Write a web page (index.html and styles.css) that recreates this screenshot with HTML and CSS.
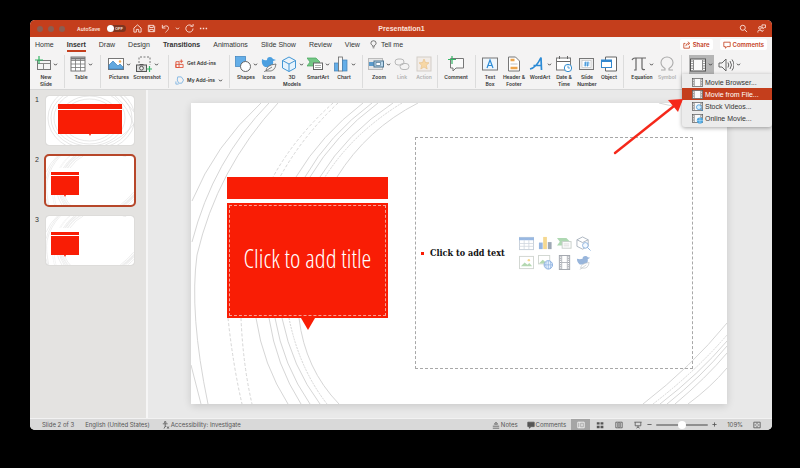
FILE: index.html
```html
<!DOCTYPE html>
<html lang="en">
<head>
    <meta charset="UTF-8">
    <meta name="viewport" content="width=device-width, initial-scale=1.0">
    <title>Presentation1</title>
    <link rel="stylesheet" href="styles.css">
</head>
<body>
    <!-- Shared symbols -->
    <svg class="symbols" aria-hidden="true">
        <symbol id="chevron" viewBox="0 0 5 5"><path d="M1 1.7 2.5 3.2 4 1.7" fill="none" stroke="#444" stroke-width="1"/></symbol>
        <symbol id="film" viewBox="0 0 16 16">
            <rect x="0.5" y="2" width="15" height="12" fill="#fafafa" stroke="#555"/>
            <path d="M3.5 3v10M12.5 3v10" stroke="#555" stroke-width="0.7"/>
            <path d="M2 3.5v10M14 3.5v10" stroke="#777" stroke-width="1.4" stroke-dasharray="1.2 1.2"/>
        </symbol>
        <symbol id="swoosh" viewBox="0 0 536 301" preserveAspectRatio="none">
            <g fill="none">
                <path d="M70 0Q24 42 1 98M78 0Q22 57 1 139M87 0Q26 66 6 152Q-2 210 17 301M0 262 10 301"/>
                <path d="M142 0Q104 34 82 74M147 0Q111 34 89 74M37 215Q42 262 51 301M50 215Q52 262 61 301" stroke-dasharray="3 2"/>
                <path d="M172 0Q130 32 105 74M181 0Q138 32 114 74M187 0Q144 32 119 74M202 0Q156 30 129 74M227 0Q176 26 146 74"/>
                <path d="M65 215Q72 262 97 301M78 215Q85 262 110 301M84 215Q92 262 119 301M91 215Q101 264 129 301M108 215Q114 266 148 301"/>
                <path d="M211 0Q162 30 134 74M98 215Q108 265 136 301" stroke-dasharray="2 1"/>
                <path d="M452 301Q500 264 536 220M469 301Q508 271 536 238M476 301Q510 274 536 243M484 301Q515 275 536 250M497 301Q520 284 536 265M468 0Q478 3 488 3"/>
                <path d="M462 301Q505 268 536 232" stroke-dasharray="2 1"/>
            </g>
        </symbol>
        <symbol id="rings" viewBox="0 0 89 49" preserveAspectRatio="none">
            <g fill="none" stroke-width="0.6">
                <ellipse cx="46" cy="22" rx="44" ry="34"/>
                <ellipse cx="46" cy="22" rx="41" ry="31"/>
                <ellipse cx="44" cy="22" rx="36" ry="28"/>
                <ellipse cx="44" cy="24" rx="30" ry="24"/>
                <ellipse cx="44" cy="24" rx="27" ry="21"/>
                <path d="M70 0Q84 12 89 30M76 0 89 16M60 49Q78 42 89 28"/>
            </g>
        </symbol>
    </svg>

    <div class="window">
        <header class="titlebar">
            <div class="titlebar-left">
                <span class="lights"><i></i><i></i><i></i></span>
                <label class="autosave" for="autosave">AutoSave</label>
                <span class="switch"><input type="checkbox" id="autosave"><span>OFF</span></span>
                <div class="quick">
                    <button aria-label="Home"><svg viewBox="0 0 10 10"><path d="M1 4.5 5 1l4 3.5V9H6.3V6H3.7v3H1z"/></svg></button>
                    <button aria-label="Save"><svg viewBox="0 0 10 10"><path d="M1.5 1.5h6l1 1v6h-7zM3 1.5v2.4h4V1.5M3 8.500V6h4v2.500"/></svg></button>
                    <button aria-label="Undo"><svg viewBox="0 0 10 10"><path d="M1.500 1v3.500H5M1.700 4.300C4 1 9 1.500 8.300 5 8 6.500 6.500 8 5 9.300"/></svg></button>
                    <button class="tiny" aria-label="Undo history"><svg viewBox="0 0 5 5"><path d="M1 1.700 2.500 3.200 4 1.700"/></svg></button>
                    <button aria-label="Redo"><svg viewBox="0 0 10 10"><path d="M8.900 5A4 4 0 1 1 7.500 2M6 2.500h3V0"/></svg></button>
                    <button aria-label="More"><svg viewBox="0 0 10 10"><path d="M1 5h1.600M4.200 5h1.600M7.400 5H9" stroke-width="1.600"/></svg></button>
                </div>
            </div>
            <h1>Presentation1</h1>
            <div class="titlebar-right">
                <button aria-label="Search"><svg viewBox="0 0 10 10"><circle cx="4.200" cy="4.200" r="2.800"/><path d="M6.300 6.300 9 9"/></svg></button>
                <button aria-label="Presence"><svg viewBox="0 0 10 10"><circle cx="3.300" cy="4.300" r="1.500"/><path d="M1 9.500V8.300Q1 7 2.500 7h2Q5.500 7 5.500 8.500M5.500 1h4v3H8L6.500 5.300V4h-1zM5.500 8.500l2-2"/></svg></button>
            </div>
        </header>

        <nav class="tabs">
            <a href="#">Home</a>
            <a href="#" class="active">Insert</a>
            <a href="#">Draw</a>
            <a href="#">Design</a>
            <a href="#" class="strong">Transitions</a>
            <a href="#">Animations</a>
            <a href="#">Slide Show</a>
            <a href="#">Review</a>
            <a href="#">View</a>
            <a href="#" class="tell"><svg viewBox="0 0 8 10"><path d="M2.800 7V6Q1 5 1 3.500a3 2.800 0 0 1 6 0Q7 5 5.200 6v1zM3 8.800h2" fill="none" stroke="#444" stroke-width="0.800"/></svg>Tell me</a>
            <div class="tab-actions">
                <button><svg viewBox="0 0 10 10"><path d="M3 3H1v6h7V6M3.500 6.500Q3.500 3 7 3M6 1l2.500 2L6 5"/></svg>Share</button>
                <button><svg viewBox="0 0 10 10"><path d="M1 1.500h8v5.500H5L3 9V7H1z"/></svg>Comments</button>
            </div>
        </nav>

        <div class="ribbon">
            <div class="group">
                <button class="tool w24"><span class="icon"><svg viewBox="0 0 16 16"><rect x="2.500" y="4.500" width="13" height="9" fill="#f4f4f4" stroke="#777"/><path d="M3 7.500h12M8.500 7.500v6" stroke="#888"/><path d="M4 0v8M0 4h8" stroke="#35b566" stroke-width="1.200"/></svg><svg class="chev"><use href="#chevron"/></svg></span>New<br>Slide</button>
            </div>
            <div class="group">
                <button class="tool w24"><span class="icon"><svg viewBox="0 0 16 16"><rect x="1" y="1" width="14" height="14" fill="#fff" stroke="#777"/><path d="M1 4.500h14M1 8h14M1 11.500h14M5.500 2v13M10.500 2v13" stroke="#777" stroke-width="0.800"/><path d="M1 2.500h14" stroke="#777" stroke-width="2"/></svg><svg class="chev"><use href="#chevron"/></svg></span>Table</button>
            </div>
            <div class="group">
                <button class="tool w28"><span class="icon"><svg viewBox="0 0 16 16"><rect x="0.500" y="2.500" width="15" height="11" fill="#fff" stroke="#777"/><path d="M1 13V9l4-4 5 5 2-2 3 3v2z" fill="#62a8df" stroke="#3a80bd" stroke-width="0.700"/><circle cx="12" cy="5.500" r="1.200" fill="#f0a850"/></svg><svg class="chev"><use href="#chevron"/></svg></span>Pictures</button>
                <button class="tool w28"><span class="icon"><svg viewBox="0 0 16 16"><path d="M3 7V1h11v8" fill="none" stroke="#777" stroke-dasharray="2 1.500"/><rect x="0.500" y="9" width="10" height="6.500" fill="#ddd" stroke="#555"/><circle cx="5.500" cy="12.200" r="1.900" fill="#eee" stroke="#555"/><path d="M3.500 8.500h4" stroke="#555"/><path d="M13.500 10v6M10.500 13h5.500" stroke="#35b566" stroke-width="1.200"/></svg><svg class="chev"><use href="#chevron"/></svg></span>Screenshot</button>
            </div>
            <div class="group addins">
                <button><svg viewBox="0 0 10 10"><path d="M1 3h3.500v6.500H1zM1 6h8v3.500H1zM7 .500v4M5 2.500h4" fill="none" stroke="#e0533a"/></svg>Get Add-ins</button>
                <button><svg viewBox="0 0 10 10"><path d="M3 1h4l2.500 3.500L7.500 8H4L2.500 4.500zM1 6v3h3" fill="none" stroke="#7fb4e2"/></svg>My Add-ins<svg class="chev"><use href="#chevron"/></svg></button>
            </div>
            <div class="group">
                <button class="tool w24"><span class="icon"><svg viewBox="0 0 16 16"><rect x="0.500" y="0.500" width="10" height="10" fill="#64aee8" stroke="#3a80bd" stroke-width="0.700"/><circle cx="10.500" cy="10.500" r="5" fill="#fff" stroke="#666"/></svg><svg class="chev"><use href="#chevron"/></svg></span>Shapes</button>
                <button class="tool w22"><span class="icon"><svg viewBox="0 0 16 16"><path d="M1 3q3 2 5 1 0-3 3-3 2 0 3 2l3 1-3 1q1 5-3 6H4Q0 9 1 3z" fill="#4b9fe0"/><path d="M5 15q0-6 10-7-1 8-8 7zM3 16l8-5" fill="#f5f5f5" stroke="#666" stroke-width="0.800"/></svg></span>Icons</button>
                <button class="tool w24"><span class="icon"><svg viewBox="0 0 16 16"><path d="M8 1l6.500 3.500v7.500L8 15.500 1.500 12V4.500zM1.500 4.500 8 8l6.500-3.500M8 8v7.500" fill="#e6f3fd" stroke="#4497d5"/></svg><svg class="chev"><use href="#chevron"/></svg></span>3D<br>Models</button>
                <button class="tool w28"><span class="icon"><svg viewBox="0 0 16 16"><path d="M0 2h9l4 4-4 4H0l3-4z" fill="#73c685" stroke="#46a65c" stroke-width="0.700"/><rect x="6.500" y="7" width="9" height="6.500" fill="#fff" stroke="#666"/><path d="M8 9.500h6M8 11.500h6" stroke="#888" stroke-width="0.700"/></svg><svg class="chev"><use href="#chevron"/></svg></span>SmartArt</button>
                <button class="tool w24"><span class="icon"><svg viewBox="0 0 16 16"><rect x="1.500" y="7" width="4" height="8" fill="#64aee8" stroke="#4380b5" stroke-width="0.700"/><rect x="5.500" y="1" width="4" height="14" fill="#f8f8f8" stroke="#666" stroke-width="0.800"/><rect x="9.500" y="4" width="4.500" height="11" fill="#64aee8" stroke="#4380b5" stroke-width="0.700"/></svg><svg class="chev"><use href="#chevron"/></svg></span>Chart</button>
            </div>
            <div class="group">
                <button class="tool w24"><span class="icon"><svg viewBox="0 0 16 16"><rect x="0.500" y="2.500" width="14" height="11" fill="#e6e6e6" stroke="#bbb"/><path d="M1 8h5" stroke="#5c9bcb" stroke-width="4"/><rect x="6" y="5" width="9.500" height="6" fill="#b9d7ec" stroke="#4d7590"/><rect x="8" y="6.500" width="4.500" height="3" fill="#fff" stroke="#4d7590" stroke-width="0.700"/></svg><svg class="chev"><use href="#chevron"/></svg></span>Zoom</button>
                <button class="tool w22" disabled><span class="icon"><svg viewBox="0 0 16 16"><g fill="none" stroke="#b8b8b8"><rect x="1" y="3" width="9" height="6" rx="3"/><rect x="6" y="7.500" width="9" height="6" rx="3"/></g></svg></span>Link</button>
                <button class="tool w22" disabled><span class="icon"><svg viewBox="0 0 16 16"><rect x="1" y="1" width="14" height="14" fill="#f2ece7" stroke="#d2cdc8"/><path d="m8 3 1.500 3.500 3.500.300-2.700 2.500.900 3.700L8 11l-3.200 2 .900-3.700L3 6.800l3.500-.300z" fill="#f7d7a5" stroke="#e6bd83" stroke-width="0.600"/></svg></span>Action</button>
            </div>
            <div class="group">
                <button class="tool w28"><span class="icon"><svg viewBox="0 0 16 16"><path d="M2.500 2.500h13v9.500H8l-3 3v-3H2.500z" fill="#fafafa" stroke="#777"/><path d="M4 0v8M0 3.500h8" stroke="#35b566" stroke-width="1.200"/></svg></span>Comment</button>
            </div>
            <div class="group">
                <button class="tool w20"><span class="icon"><svg viewBox="0 0 16 16"><rect x="0.500" y="2" width="15" height="12" fill="#eef6fc" stroke="#777"/><path d="M5 12 8 4l3 8M6 9.500h4" fill="none" stroke="#2c8bd6" stroke-width="1.200"/></svg></span>Text<br>Box</button>
                <button class="tool w28"><span class="icon"><svg viewBox="0 0 16 16"><path d="M2.500 1h7l4 4v10h-11z" fill="#fff" stroke="#777"/><path d="M4.500 4h4M4.500 12h7" stroke="#eda54c" stroke-width="2.400"/><path d="M4.500 8h7" stroke="#aaa" stroke-width="0.700"/></svg></span>Header &amp;<br>Footer</button>
                <button class="tool w24"><span class="icon"><svg viewBox="0 0 16 16"><path d="M1 13Q7 12 12 1.500L12.500 14M4.500 9.500h8" fill="none" stroke="#2c8bd6" stroke-width="1.700"/></svg><svg class="chev"><use href="#chevron"/></svg></span>WordArt</button>
                <button class="tool w24"><span class="icon"><svg viewBox="0 0 16 16"><rect x="0.500" y="2" width="14" height="12" fill="#fff" stroke="#777"/><path d="M1 5.500h13M3.500 0v3M11.500 0v3" stroke="#666"/><circle cx="12" cy="12" r="3.700" fill="#fff" stroke="#318dd1"/><path d="M12 9.500V12h2" fill="none" stroke="#318dd1" stroke-width="0.800"/></svg></span>Date &amp;<br>Time</button>
                <button class="tool w22"><span class="icon"><svg viewBox="0 0 16 16"><rect x="0.500" y="2.500" width="14" height="11" fill="#eee" stroke="#777"/><rect x="3" y="4.500" width="9" height="7" fill="#fff" stroke="#bbb" stroke-width="0.600"/><path d="M6.800 5.500 6.200 10.500M9 5.500l-.600 5M5 7h5.500M4.800 9h5.500" stroke="#2c8bd6" stroke-width="0.800"/></svg></span>Slide<br>Number</button>
                <button class="tool w22"><span class="icon"><svg viewBox="0 0 16 16"><path d="M4.500 1h11v14h-11z" fill="#fff" stroke="#666"/><rect x="0.500" y="4" width="10" height="7.500" fill="#fff" stroke="#3187cf"/><path d="M.500 5h10" stroke="#3187cf" stroke-width="2"/></svg></span>Object</button>
            </div>
            <div class="group">
                <button class="tool w28"><span class="icon"><svg viewBox="0 0 16 16"><path d="M1 4q1-2 3-2h11M5 2.500V14H3M11 2.500V12q0 2 3 1.500" fill="none" stroke="#666" stroke-width="1.200"/></svg><svg class="chev"><use href="#chevron"/></svg></span>Equation</button>
                <button class="tool w22" disabled><span class="icon"><svg viewBox="0 0 16 16"><path d="M2 14h4v-1.500Q2 10 2 6.500a6 5.500 0 0 1 12 0Q14 10 10 12.500V14h4" fill="none" stroke="#aaa" stroke-width="1.100"/></svg></span>Symbol</button>
            </div>
            <div class="group media">
                <button class="media-button open" aria-label="Video"><svg><use href="#film"/></svg><svg class="chev"><use href="#chevron"/></svg></button>
                <button class="media-button" aria-label="Audio"><svg viewBox="0 0 16 16"><path d="M1 6h3l4-4v12l-4-4H1zM10 5.500q1.500 2.500 0 5M12 4q3 4 0 8M14 2.500q4 5.500 0 11" fill="none" stroke="#666"/></svg><svg class="chev"><use href="#chevron"/></svg></button>
                <div class="menu">
                    <button><svg><use href="#film"/></svg>Movie Browser...</button>
                    <button class="selected"><svg><use href="#film"/></svg>Movie from File...</button>
                    <button><svg viewBox="0 0 16 16"><use href="#film"/><circle cx="10" cy="9" r="3.500" fill="#d8effb" stroke="#2c8bd6"/><path d="m12.500 11.500 3 3" stroke="#2c8bd6" stroke-width="1.300"/></svg>Stock Videos...</button>
                    <button><svg viewBox="0 0 16 16"><use href="#film"/><circle cx="11.500" cy="11" r="4.500" fill="#4ca7e2"/><path d="M7 11h9M11.500 6.500v9" stroke="#d8effb" stroke-width="0.700"/></svg>Online Movie...</button>
                    <svg class="pointer" viewBox="0 0 72 58"><path d="M3 55 62 8" stroke="#f5281a" stroke-width="2.400" stroke-linecap="round"/><path d="M71 1 66 14 56 2z" fill="#f5281a"/></svg>
                </div>
            </div>
        </div>

        <main class="workspace">
            <aside class="thumbs">
                <div class="thumb-row"><span>1</span><div class="thumb title-slide"><svg><use href="#rings"/></svg><div class="mini"></div></div></div>
                <div class="thumb-row"><span>2</span><div class="thumb current"><svg><use href="#swoosh"/></svg><div class="mini"></div></div></div>
                <div class="thumb-row"><span>3</span><div class="thumb"><svg><use href="#swoosh"/></svg><div class="mini"></div></div></div>
            </aside>
            <section class="canvas">
                <div class="slide">
                    <svg class="lines"><use href="#swoosh"/></svg>
                    <div class="title-block">
                        <div class="title-bar"></div>
                        <div class="title-box"><h2>Click to add title</h2></div>
                    </div>
                    <div class="text-box">
                        <p>Click to add text</p>
                        <div class="inserts">
                            <svg viewBox="0 0 16 16"><rect x="0.500" y="1.500" width="15" height="13" fill="#fff" stroke="#b8c4d2"/><path d="M0 3h16" stroke="#7fa7dc" stroke-width="3"/><path d="M0 8h16M0 11h16M5.500 4v10M10.500 4v10" stroke="#c3cbd5" stroke-width="0.800"/></svg>
                            <svg viewBox="0 0 16 16"><path d="M1 7h4v7H1z" fill="#7da5dc"/><path d="M5.500 1h4v13h-4z" fill="#f3cf75"/><path d="M10.500 6.500h4V14h-4z" fill="#8793a3"/></svg>
                            <svg viewBox="0 0 16 16"><path d="M0 2h10l4 4-4 4H0l3-4z" fill="#9bcf9f"/><rect x="5.500" y="6" width="9.500" height="7" fill="#fff" stroke="#b9c3bd"/><path d="M7 8.500h6M7 10.500h6" stroke="#bbb" stroke-width="0.700"/></svg>
                            <svg viewBox="0 0 16 16"><path d="M7 1l6 3v7l-6 3-6-3V4zM1 4l6 3 6-3" fill="#fff" stroke="#8c99a8" stroke-width="0.900"/><circle cx="10" cy="10" r="3" fill="#f2f8ff" stroke="#6fa0d6"/><path d="m12 12 3.500 3.500" stroke="#6fa0d6"/></svg>
                            <svg viewBox="0 0 16 16"><rect x="0.500" y="1.500" width="15" height="13" fill="#fff" stroke="#c6ccc6"/><path d="M2 12l4-4 3 2.500 2-2 3 3.500z" fill="#a2cf9e"/><circle cx="10.500" cy="5.500" r="1.300" fill="#f3cf75"/></svg>
                            <svg viewBox="0 0 16 16"><rect x="0.500" y="0.500" width="12" height="9" fill="#fff" stroke="#c6ccc6"/><path d="M1 9l4-4 5 4z" fill="#a2cf9e"/><circle cx="11" cy="10.500" r="4.500" fill="#e1efff" stroke="#6998d6"/><path d="M6.500 10.500h9M11 6v9M8.800 7q-1 3.500 0 7M13.200 7q1 3.500 0 7" fill="none" stroke="#6998d6" stroke-width="0.700"/></svg>
                            <svg viewBox="0 0 16 16"><rect x="2.500" y="0.500" width="11" height="15" fill="#fff" stroke="#8a8f98"/><path d="M5 1v14M11 1v14M5 8h6" stroke="#8a8f98" stroke-width="0.800"/><path d="M3.800 1.500v14M12.200 1.500v14" stroke="#8a8f98" stroke-width="1.400" stroke-dasharray="1 1"/></svg>
                            <svg viewBox="0 0 16 16"><path d="M1 4q3 1 6 0 0-3 3-3 2 0 2.500 1.500l2.500.500-2.500 1.500q1 5-4 5.500H4Q1 8 1 4z" fill="#7fa3d3"/><path d="M5 14q0-5 9-6-1 7-7 6zM4 15.500l7-5" fill="#fff" stroke="#b0b5bb" stroke-width="0.700"/></svg>
                        </div>
                    </div>
                </div>
            </section>
        </main>

        <footer class="status">
            <span class="slide-count">Slide 2 of 3</span>
            <span class="language">English (United States)</span>
            <button><svg viewBox="0 0 10 10"><circle cx="4" cy="1.500" r="1"/><path d="M1 3.500h6M4 3.500v3L2.500 9.500M4 6l1 1.500M6 7l3 2.500M9 7 6 9.500"/></svg>Accessibility: Investigate</button>
            <div class="status-right">
                <button><svg viewBox="0 0 10 10"><path d="M1 9h8M1 6.500h8M3 4l2-2.500L7 4z"/></svg>Notes</button>
                <button class="comments"><svg viewBox="0 0 10 10"><path d="M1 1.500h8v5.500H5L3 9V7H1z" fill="#555"/></svg>Comments</button>
                <div class="views">
                    <button class="on" aria-label="Normal"><svg viewBox="0 0 10 10"><path d="M1 1.500h8v7H1zM3.500 1.500v7M5 4h2.500M5 6h2.500" stroke="#fff"/></svg></button>
                    <button aria-label="Slide sorter"><svg viewBox="0 0 10 10"><path d="M1 3h3.500M5.700 3h3.500M1 7.500h3.500M5.700 7.500h3.500" stroke-width="3"/></svg></button>
                    <button aria-label="Reading view"><svg viewBox="0 0 10 10"><path d="M1 1.500h8v7H1zM5 1.500v7M2.500 3.500h1.500M2.500 5h1.500M2.500 6.500h1.500M6 3.500h1.500M6 5h1.500M6 6.500h1.500"/></svg></button>
                    <button aria-label="Slide show"><svg viewBox="0 0 10 10"><path d="M.500 1.500h9M1.500 1.500v4.500h7V1.500M5 6v2M3 9l2-1.500L7 9"/></svg></button>
                </div>
                <button class="sign" aria-label="Zoom out"><svg viewBox="0 0 6 6"><path d="M.500 3h5"/></svg></button>
                <input type="range" aria-label="Zoom level" min="0" max="100" value="50">
                <button class="sign" aria-label="Zoom in"><svg viewBox="0 0 6 6"><path d="M.500 3h5M3 .500v5"/></svg></button>
                <span class="percent">109%</span>
                <button aria-label="Fit slide"><svg viewBox="0 0 10 10"><path d="M1 1.500h8v7H1zM5 2v2M5 6v2M2 5h2M6 5h2"/></svg></button>
            </div>
        </footer>
    </div>
</body>
</html>
```
FILE: styles.css
```css
* {
    box-sizing: border-box;
}

body {
    margin: 0;
    padding: 20px 28px 38px 30px;
    height: 100vh;
    display: flex;
    background: #000;
    font-family: "Liberation Sans", Arial, sans-serif;
    font-size: 7px;
    color: #333;
}

button {
    display: flex;
    align-items: center;
    margin: 0;
    padding: 0;
    border: 0;
    background: none;
    font: inherit;
    color: inherit;
}

svg {
    flex: none;
}

.symbols {
    position: absolute;
    width: 0;
    height: 0;
}

.window {
    flex: 1;
    min-width: 0;
    display: flex;
    flex-direction: column;
    border-radius: 5px;
    background: #f4f3f3;
}

/* Title bar */
.titlebar {
    display: grid;
    grid-template-columns: 1fr auto 1fr;
    align-items: center;
    height: 17px;
    padding: 0 6px 0 7px;
    border-radius: 5px 5px 0 0;
    background: #c43e1c;
    color: #fbe3dc;
}

.titlebar h1 {
    margin: 0;
    font-size: 7px;
}

.titlebar svg {
    width: 9px;
    height: 9px;
    fill: none;
    stroke: #fbe3dc;
}

.titlebar-left,
.quick {
    display: flex;
    align-items: center;
}

.titlebar-right {
    display: flex;
    justify-content: flex-end;
    gap: 9px;
}

.lights {
    display: flex;
    gap: 5px;
}

.lights i {
    width: 6px;
    height: 6px;
    border-radius: 50%;
    background: #8c5e52;
}

.autosave {
    margin-left: 12px;
    font-family: Inter, sans-serif;
    font-size: 5px;
    font-weight: 600;
    width: 26px;
    white-space: nowrap;
}

.switch {
    display: flex;
    align-items: center;
    width: 19px;
    height: 7px;
    margin-left: 4px;
    border-radius: 4px;
    background: #7d3520;
    font-size: 4px;
    font-weight: bold;
}

.switch input {
    appearance: none;
    width: 7px;
    height: 7px;
    margin: 0 1px 0 0;
    border-radius: 50%;
    background: #fff;
}

.quick {
    gap: 5px;
    margin-left: 7px;
}

.quick .tiny svg {
    width: 5px;
    height: 5px;
}

/* Tabs */
.tabs {
    display: flex;
    align-items: center;
    gap: 13px;
    height: 15px;
    padding: 0 5px;
}

.tabs a {
    height: 14px;
    line-height: 14px;
    color: #333;
    text-decoration: none;
    white-space: nowrap;
}

.tabs .active {
    border-bottom: 2px solid #c43e1c;
    font-weight: bold;
}

.tabs .strong {
    font-weight: bold;
}

.tabs .tell {
    display: flex;
    align-items: center;
    gap: 4px;
    margin-left: -3px;
}

.tell svg {
    width: 7px;
    height: 9px;
}

.tab-actions {
    display: flex;
    gap: 7px;
    margin-left: auto;
}

.tab-actions button {
    gap: 2px;
    height: 11px;
    padding: 0 3px;
    border-radius: 2px;
    background: #fff;
    color: #c43e1c;
    font-family: Inter, sans-serif;
    font-size: 6px;
    font-weight: 600;
}

.tab-actions svg {
    width: 8px;
    height: 8px;
    fill: none;
    stroke: #c43e1c;
}

/* Ribbon */
.ribbon {
    display: grid;
    grid-template-columns: 35fr 36fr 68fr 61fr 133fr 75fr 38fr 148fr 58fr 90fr;
    height: 38px;
    padding: 3px 0;
    border-bottom: 1px solid #d6d6d6;
    font-family: Inter, sans-serif;
    font-size: 5px;
    font-weight: 600;
    line-height: 7px;
}

.group {
    display: flex;
    align-items: flex-start;
    min-width: 0;
    padding: 0 0 0 4px;
    border-right: 1px solid #dcdcdc;
}

.tool {
    flex: none;
    display: flex;
    flex-direction: column;
    white-space: nowrap;
}

.tool:disabled {
    color: #b0b0b0;
}

.w20 { width: 20px; }
.w22 { width: 22px; }
.w24 { width: 24px; }
.w28 { width: 28px; }

.icon {
    display: flex;
    align-items: center;
    gap: 2px;
    margin: 1px 0 2px;
}

.icon svg {
    width: 16px;
    height: 16px;
}

.ribbon .chev {
    width: 5px;
    height: 5px;
}

.addins {
    flex-direction: column;
    gap: 8px;
    padding: 4px 0 0 6px;
}

.addins button {
    gap: 3px;
    white-space: nowrap;
}

.addins svg {
    width: 9px;
    height: 9px;
}

.media {
    position: relative;
    gap: 3px;
    padding-left: 7px;
    border: 0;
}

.media-button {
    gap: 2px;
    height: 19px;
    padding: 0 1px;
}

.media-button svg {
    width: 16px;
    height: 16px;
}

.media-button.open {
    background: #b5b5b5;
}

.menu {
    position: absolute;
    z-index: 2;
    top: 19px;
    left: 0;
    right: 0;
    display: flex;
    flex-direction: column;
    justify-content: space-between;
    height: 53px;
    padding: 2px 0;
    border-radius: 0 0 3px 3px;
    background: #ececec;
    box-shadow: 0 1px 4px rgba(0, 0, 0, 0.35);
    font-family: "Liberation Sans", Arial, sans-serif;
    font-size: 7px;
    font-weight: normal;
}

.menu button {
    gap: 2px;
    height: 12px;
    padding-left: 10px;
    white-space: nowrap;
}

.menu button svg {
    width: 11px;
    height: 11px;
}

.menu .selected {
    background: #c43e1c;
    color: #fff;
}

.pointer {
    position: absolute;
    top: 24px;
    right: calc(100% - 2px);
    width: 72px;
    height: 58px;
}

/* Workspace */
.workspace {
    flex: 1;
    min-height: 0;
    display: flex;
    background: #e9e9e9;
}

.thumbs {
    display: flex;
    flex-direction: column;
    gap: 11px;
    width: 118px;
    padding: 6px 12px 0 5px;
    background: #e4e3e1;
    border-right: 2px solid #f6f6f6;
}

.thumb-row {
    display: flex;
    gap: 7px;
    font-size: 7px;
}

.thumb-row span {
    width: 4px;
}

.thumb {
    position: relative;
    flex: 1;
    height: 49px;
    padding: 16px 0 0 5px;
    border-radius: 3px;
    background: #fff;
    box-shadow: 0 0 1px rgba(0, 0, 0, 0.3);
}

.thumb svg,
.lines {
    position: absolute;
    inset: 0;
    width: 100%;
    height: 100%;
    stroke: #d6d6d6;
}

.thumb:not(.title-slide) svg {
    stroke-width: 3;
    stroke: #dcdcdc;
}

.thumb.current {
    outline: 2px solid #b7472a;
}

.mini {
    position: relative;
    width: 28px;
    height: 23px;
    background: linear-gradient(#f91d05 3px, #fff 3px, #fff 4px, #f91d05 4px);
}

.mini::after {
    content: "";
    position: absolute;
    top: 100%;
    left: calc(50% - 1px);
    border: 1px solid transparent;
    border-top: 2px solid #f91d05;
}

.title-slide {
    padding: 8px 12px;
}

.title-slide .mini {
    width: auto;
    height: 30px;
    background: linear-gradient(#f91d05 5px, #fff 5px, #fff 6px, #f91d05 6px);
}

.canvas {
    flex: 1;
    display: flex;
    padding: 13px 45px 14px 43px;
}

.slide {
    position: relative;
    flex: 1;
    display: flex;
    gap: 27px;
    padding: 34px 34px 35px 36px;
    background: #fff;
    box-shadow: 0 2px 8px rgba(0, 0, 0, 0.14);
}

.title-block {
    position: relative;
    flex: 161 1 0;
    display: flex;
    flex-direction: column;
    gap: 4px;
    padding: 40px 0 51px;
}

.title-bar {
    height: 22px;
    background: #f91d05;
}

.title-box {
    position: relative;
    flex: 1;
    display: flex;
    padding: 2px;
    background: #f91d05;
}

.title-box::after {
    content: "";
    position: absolute;
    top: 100%;
    left: calc(50% - 7px);
    border: 7px solid transparent;
    border-top: 12px solid #f91d05;
    border-bottom: 0;
}

.title-box h2 {
    flex: 1;
    display: flex;
    align-items: center;
    justify-content: center;
    margin: 0;
    padding-bottom: 5px;
    border: 1px dashed #f5a396;
    color: #fff;
    font-family: "Open Sans Condensed Light", "Open Sans Light Condensed", "Noto Sans Condensed Light", "Liberation Sans Narrow", "Open Sans", sans-serif;
    font-size: 25px;
    font-weight: 300;
    white-space: nowrap;
}

.text-box {
    position: relative;
    flex: 276 1 0;
    display: flex;
    align-items: center;
    gap: 14px;
    border: 1px dashed #a8a8a8;
}

.text-box p {
    display: flex;
    align-items: center;
    gap: 6px;
    margin: 0 0 0 5px;
    color: #111;
    font-family: "DejaVu Serif Condensed", "DejaVu Serif", serif;
    font-size: 9px;
    font-weight: bold;
    white-space: nowrap;
}

.text-box p::before {
    content: "";
    width: 3px;
    height: 3px;
    background: #f91d05;
}

.inserts {
    display: grid;
    grid-template-columns: repeat(4, 15px);
    gap: 4px;
    opacity: 0.8;
}

.inserts svg {
    width: 15px;
    height: 15px;
}

/* Status bar */
.status {
    display: flex;
    align-items: center;
    height: 12px;
    padding: 0 11px 0 12px;
    border-top: 1px solid #f2f2f2;
    border-radius: 0 0 5px 5px;
    background: #d9d9d9;
    color: #555;
    font-family: Inter, sans-serif;
    font-size: 6px;
    white-space: nowrap;
}

.language {
    margin: 0 12px 0 11px;
}

.status button {
    gap: 1px;
}

.status svg {
    width: 8px;
    height: 8px;
    fill: none;
    stroke: #555;
}

.status-right {
    display: flex;
    align-items: center;
    height: 100%;
    margin-left: auto;
}

.comments {
    margin: 0 5px 0 9px;
}

.views {
    display: flex;
    height: 100%;
}

.views button {
    justify-content: center;
    width: 19px;
}

.views .on {
    background: #a5a5a5;
}

.status .sign svg {
    width: 5px;
    height: 5px;
}

.status input {
    appearance: none;
    width: 52px;
    height: 2px;
    margin: 0 4px;
    border-radius: 1px;
    background: #8f8f8f;
}

.status input::-webkit-slider-thumb {
    appearance: none;
    width: 8px;
    height: 8px;
    border-radius: 50%;
    background: #fff;
}

.percent {
    margin: 0 10px;
}
```
